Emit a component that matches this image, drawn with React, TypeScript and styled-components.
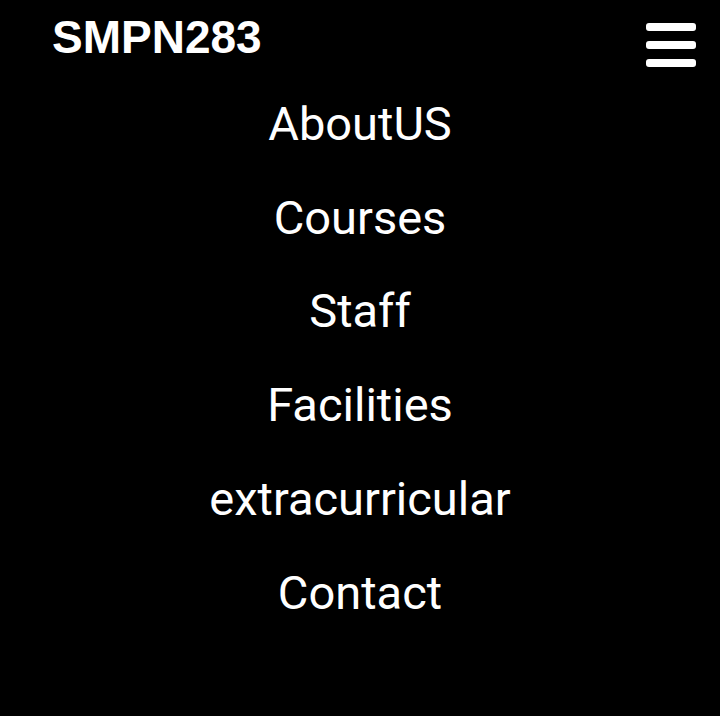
import React from "react";
import styled, { createGlobalStyle } from "styled-components";

const Global = createGlobalStyle`
  html, body { margin: 0; padding: 0; background: #000; }
  body { font-family: Roboto, "Liberation Sans", sans-serif; color: #fff; }
`;

const Page = styled.div`
  width: 720px;
  height: 716px;
  background: #000;
  overflow: hidden;
`;

const Header = styled.header`
  height: 77px;
  display: flex;
  justify-content: space-between;
  align-items: flex-start;
  padding: 0 24px 0 52px;
  box-sizing: border-box;
`;

const Logo = styled.div`
  font-family: "Liberation Sans", Arial, sans-serif;
  font-weight: 700;
  font-size: 46px;
  line-height: 46px;
  margin-top: 14px;
  color: #fff;
`;

const MenuButton = styled.button`
  margin-top: 23px;
  background: none;
  border: 0;
  padding: 0;
  display: flex;
  flex-direction: column;
  gap: 10px;
  cursor: pointer;
`;

const Bar = styled.span`
  display: block;
  width: 50px;
  height: 8px;
  border-radius: 3px;
  background: #fff;
`;

const Nav = styled.nav`
  display: flex;
  flex-direction: column;
  align-items: center;
`;

const NavItem = styled.a`
  font-family: Roboto, sans-serif;
  font-size: 47px;
  line-height: 93.7px;
  color: #fff;
  text-decoration: none;
`;

const items = ["AboutUS", "Courses", "Staff", "Facilities", "extracurricular", "Contact"];

export default function App() {
  return (
    <Page>
      <Global />
      <Header>
        <Logo>SMPN283</Logo>
        <MenuButton aria-label="menu">
          <Bar />
          <Bar />
          <Bar />
        </MenuButton>
      </Header>
      <Nav>
        {items.map((t) => (
          <NavItem key={t} href="#">
            {t}
          </NavItem>
        ))}
      </Nav>
    </Page>
  );
}
